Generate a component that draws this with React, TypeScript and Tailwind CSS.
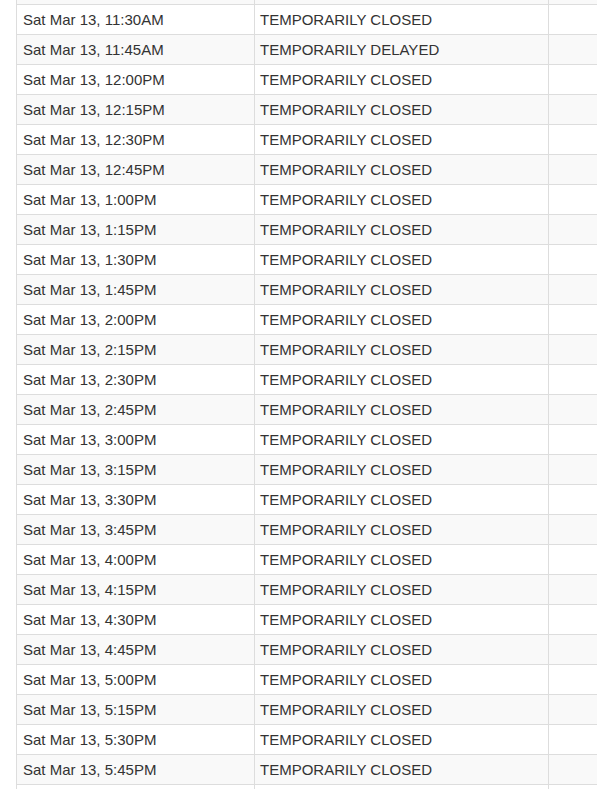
const times = [
  "",
  "11:30AM",
  "11:45AM",
  "12:00PM",
  "12:15PM",
  "12:30PM",
  "12:45PM",
  "1:00PM",
  "1:15PM",
  "1:30PM",
  "1:45PM",
  "2:00PM",
  "2:15PM",
  "2:30PM",
  "2:45PM",
  "3:00PM",
  "3:15PM",
  "3:30PM",
  "3:45PM",
  "4:00PM",
  "4:15PM",
  "4:30PM",
  "4:45PM",
  "5:00PM",
  "5:15PM",
  "5:30PM",
  "5:45PM",
  "",
];

export default function App() {
  return (
    <div className="h-[789px] overflow-hidden bg-white pl-[16px]">
      <table
        className="-mt-[26px] w-[680px] border-collapse text-[15px] leading-[19px] text-[#333]"
        style={{ fontFamily: '"Liberation Sans", Arial, sans-serif' }}
      >
        <tbody>
          {times.map((t, i) => (
            <tr key={i} className={i % 2 === 0 ? "bg-[#f9f9f9]" : "bg-white"}>
              <td className="h-[30px] w-[238px] border border-[#ddd] px-[6px] py-[5px] whitespace-nowrap">
                {t && `Sat Mar 13, ${t}`}
              </td>
              <td className="w-[294px] border border-[#ddd] px-[5px] py-[5px] whitespace-nowrap">
                {t && (t === "11:45AM" ? "TEMPORARILY DELAYED" : "TEMPORARILY CLOSED")}
              </td>
              <td className="border border-[#ddd] px-[5px] py-[5px]"></td>
            </tr>
          ))}
        </tbody>
      </table>
    </div>
  );
}
